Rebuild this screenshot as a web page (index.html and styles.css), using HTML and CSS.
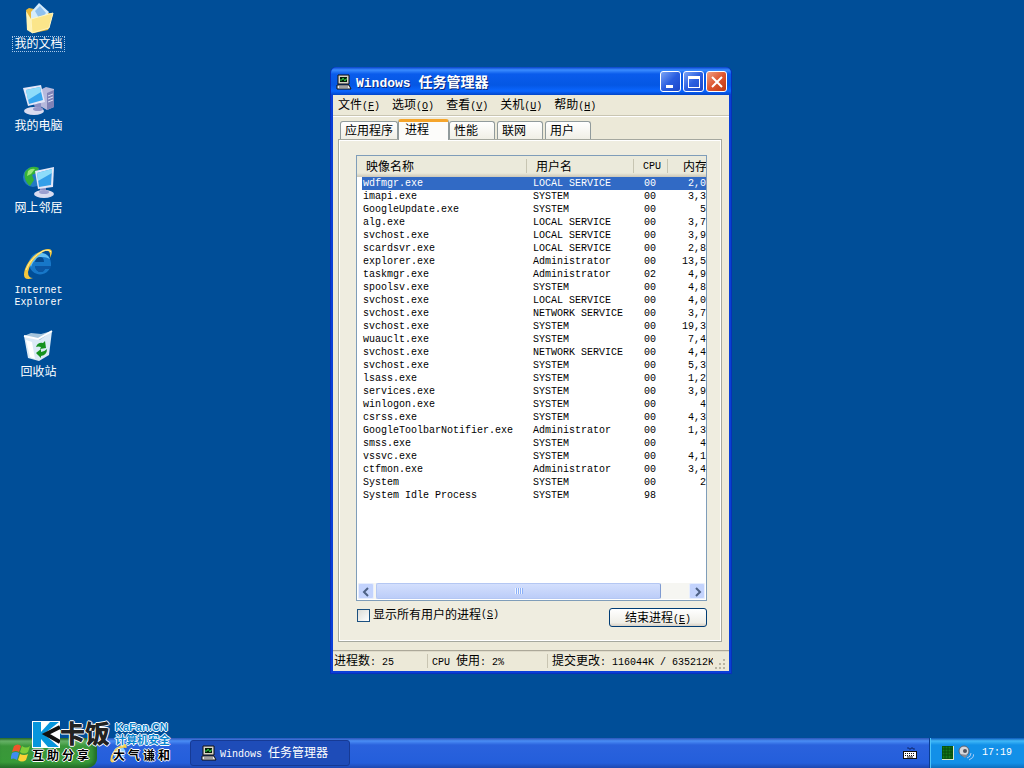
FILE: index.html
```html
<!DOCTYPE html>
<html lang="zh-CN">
<head>
    <meta charset="UTF-8">
    <meta name="viewport" content="width=device-width, initial-scale=1.0">
    <title>Windows 任务管理器</title>
    <link rel="stylesheet" href="styles.css">
</head>
<body>
    <main class="desktop">
        <nav class="icons">
            <a href="#" class="icon selected">
                <svg width="32" height="32" viewBox="0 0 32 32">
                    <path d="M3 8l3-2 5 1 1 3 14 1 4 1-5 16-14 3-5-2z" fill="#e9b93b"/>
                    <path d="M8 10l8-9 10 9-9 14-9-4z" fill="#d6ecfb"/>
                    <path d="M12 9l5-5 6 7-6 7z" fill="#8fc0ee"/>
                    <path d="M8 17l22-6-4 15-17 5z" fill="#fbe58a"/>
                    <path d="M3 9l5 8 1 14-5-3z" fill="#fff3b4"/>
                    <path d="M8 17l22-6-4 15-17 5z" fill="none" stroke="#fff6c4"/>
                </svg>
                <span>我的文档</span>
            </a>
            <a href="#" class="icon">
                <svg width="32" height="32" viewBox="0 0 32 32">
                    <path d="M17 6l6-3 8 2v18l-7 3-7-4z" fill="#b7b9dc"/>
                    <path d="M24 9l7-3v17l-7 3z" fill="#7f82b6"/>
                    <path d="M25 12l5-2M25 15l5-2M25 18l5-2" stroke="#dfe2f6"/>
                    <path d="M11 20l7-1v6h-6z" fill="#8b8fc4"/>
                    <ellipse cx="11" cy="27" rx="10" ry="4" fill="#dadcf0"/>
                    <ellipse cx="15" cy="25" rx="5" ry="2" fill="#9496c8"/>
                    <path d="M0 4l18-3 4 17-17 4z" fill="#e4e7f8"/>
                    <path d="M3 6l14-3 3 13-14 4z" fill="#38a6ee"/>
                    <path d="M3 6l14-3 1 5-13 8z" fill="#8edcfa"/>
                </svg>
                <span>我的电脑</span>
            </a>
            <a href="#" class="icon">
                <svg width="32" height="32" viewBox="0 0 32 32">
                    <circle cx="10" cy="11" r="10" fill="#237ac5"/>
                    <path d="M2 6q6-8 14-4l-3 5-4 2 2 5-4 6q-7-6-5-14z" fill="#35b238"/>
                    <path d="M5 5q3-3 7-2l-4 5-4 2z" fill="#98e777"/>
                    <path d="M17 20h6v6h-6z" fill="#8b8fc4"/>
                    <ellipse cx="21" cy="28" rx="10" ry="4" fill="#dadcf0"/>
                    <ellipse cx="21" cy="26" rx="5" ry="2" fill="#9da0d0"/>
                    <path d="M12 5l19-4-1 20-15 2z" fill="#e4e7f8"/>
                    <path d="M14 7l15-4-1 16-12 2z" fill="#359fe9"/>
                    <path d="M14 7l15-4v4L15 15z" fill="#8edcfa"/>
                </svg>
                <span>网上邻居</span>
            </a>
            <a href="#" class="icon">
                <svg width="32" height="32" viewBox="0 0 32 32">
                    <path d="M27 20A11 11 0 1 1 28 15v3H12q1 6 6 6 3 0 4-4z" fill="#1777c8"/>
                    <path d="M8 12q3-7 11-7 6 1 8 6-8-4-13 0-4 2-6 8-2-3 0-7z" fill="#63c0f5"/>
                    <path d="M12 14h9q0-5-4-5t-5 5z" fill="#04498f"/>
                    <path d="M12 18h16l-1 3h-5q-1 3-4 3-5 0-6-6z" fill="#0b56a4"/>
                    <path d="M27 10q6-12-7-8Q7 8 2 21q-4 13 8 9-5 0-5-6Q8 11 20 4q8-4 7 6z" fill="#f4c73c"/>
                    <path d="M3 22Q8 9 20 3q6-2 8 1" fill="none" stroke="#fff0a0"/>
                </svg>
                <span class="en">Internet<br>Explorer</span>
            </a>
            <a href="#" class="icon">
                <svg width="32" height="32" viewBox="0 0 32 32">
                    <path d="M1 6l13 2 15-7-3 24-10 6-11-3z" fill="#dbeaf6"/>
                    <path d="M1 6l7-3 10 1 11-3-12 9z" fill="#a5c5dd"/>
                    <path d="M1 6l14 3 14-8" fill="none" stroke="#fff" stroke-width="2"/>
                    <path d="M3 10l4 17 5 2-3-17z" fill="#fff"/>
                    <path d="M13 17q2-5 7-4l2-2 1 7-6 1 1-2q-3-1-5 0zM24 19q0 6-6 7v2l-5-5 5-4v3q3 0 6-3z" fill="#15921e"/>
                </svg>
                <span>回收站</span>
            </a>
        </nav>

        <section class="window">
            <header class="titlebar">
                <svg width="16" height="16" viewBox="0 0 16 16">
                    <path d="M2 1h11v9H2z" fill="#d8d4c8" stroke="#111"/>
                    <path d="M4 3h7v5H4z" fill="#041c08"/>
                    <path d="M4 6h2l1-2 2 3 1-2h1" fill="none" stroke="#36d24a"/>
                    <path d="M1 11h12l2 4H1z" fill="#eee" stroke="#111"/>
                    <path d="M3 13h9" stroke="#555"/>
                </svg>
                <h1><span class="en">Windows </span>任务管理器</h1>
                <button class="caption" aria-label="最小化">
                    <svg width="20" height="20" viewBox="0 0 20 20"><path d="M5 13h7v3H5z" fill="#fff"/></svg>
                </button>
                <button class="caption" aria-label="最大化">
                    <svg width="20" height="20" viewBox="0 0 20 20"><path d="M4 4h12v12H4zM5 7v8h10V7z" fill="#fff" fill-rule="evenodd"/></svg>
                </button>
                <button class="caption close" aria-label="关闭">
                    <svg width="20" height="20" viewBox="0 0 20 20"><path d="M5 5l10 10M15 5L5 15" stroke="#fff" stroke-width="2"/></svg>
                </button>
            </header>

            <div class="content">
                <div class="menu">
                    <button>文件<span class="en">(<u>F</u>)</span></button>
                    <button>选项<span class="en">(<u>O</u>)</span></button>
                    <button>查看<span class="en">(<u>V</u>)</span></button>
                    <button>关机<span class="en">(<u>U</u>)</span></button>
                    <button>帮助<span class="en">(<u>H</u>)</span></button>
                </div>

                <div class="tabs" role="tablist">
                    <button class="tab wide" role="tab">应用程序</button>
                    <button class="tab active" role="tab" aria-selected="true">进程</button>
                    <button class="tab" role="tab">性能</button>
                    <button class="tab" role="tab">联网</button>
                    <button class="tab" role="tab">用户</button>
                </div>

                <div class="panel">
                    <div class="list">
                        <table>
                            <colgroup>
                                <col class="col-name">
                                <col class="col-user">
                                <col class="col-cpu">
                                <col>
                            </colgroup>
                            <thead>
                                <tr><th>映像名称</th><th>用户名</th><th class="en">CPU</th><th>内存</th></tr>
                            </thead>
                            <tbody>
                                <tr class="current"><td>wdfmgr.exe</td><td>LOCAL SERVICE</td><td>00</td><td>2,0</td></tr>
                                <tr><td>imapi.exe</td><td>SYSTEM</td><td>00</td><td>3,3</td></tr>
                                <tr><td>GoogleUpdate.exe</td><td>SYSTEM</td><td>00</td><td>5</td></tr>
                                <tr><td>alg.exe</td><td>LOCAL SERVICE</td><td>00</td><td>3,7</td></tr>
                                <tr><td>svchost.exe</td><td>LOCAL SERVICE</td><td>00</td><td>3,9</td></tr>
                                <tr><td>scardsvr.exe</td><td>LOCAL SERVICE</td><td>00</td><td>2,8</td></tr>
                                <tr><td>explorer.exe</td><td>Administrator</td><td>00</td><td>13,5</td></tr>
                                <tr><td>taskmgr.exe</td><td>Administrator</td><td>02</td><td>4,9</td></tr>
                                <tr><td>spoolsv.exe</td><td>SYSTEM</td><td>00</td><td>4,8</td></tr>
                                <tr><td>svchost.exe</td><td>LOCAL SERVICE</td><td>00</td><td>4,0</td></tr>
                                <tr><td>svchost.exe</td><td>NETWORK SERVICE</td><td>00</td><td>3,7</td></tr>
                                <tr><td>svchost.exe</td><td>SYSTEM</td><td>00</td><td>19,3</td></tr>
                                <tr><td>wuauclt.exe</td><td>SYSTEM</td><td>00</td><td>7,4</td></tr>
                                <tr><td>svchost.exe</td><td>NETWORK SERVICE</td><td>00</td><td>4,4</td></tr>
                                <tr><td>svchost.exe</td><td>SYSTEM</td><td>00</td><td>5,3</td></tr>
                                <tr><td>lsass.exe</td><td>SYSTEM</td><td>00</td><td>1,2</td></tr>
                                <tr><td>services.exe</td><td>SYSTEM</td><td>00</td><td>3,9</td></tr>
                                <tr><td>winlogon.exe</td><td>SYSTEM</td><td>00</td><td>4</td></tr>
                                <tr><td>csrss.exe</td><td>SYSTEM</td><td>00</td><td>4,3</td></tr>
                                <tr><td>GoogleToolbarNotifier.exe</td><td>Administrator</td><td>00</td><td>1,3</td></tr>
                                <tr><td>smss.exe</td><td>SYSTEM</td><td>00</td><td>4</td></tr>
                                <tr><td>vssvc.exe</td><td>SYSTEM</td><td>00</td><td>4,1</td></tr>
                                <tr><td>ctfmon.exe</td><td>Administrator</td><td>00</td><td>3,4</td></tr>
                                <tr><td>System</td><td>SYSTEM</td><td>00</td><td>2</td></tr>
                                <tr><td>System Idle Process</td><td>SYSTEM</td><td>98</td><td></td></tr>
                            </tbody>
                        </table>
                        <div class="scrollbar">
                            <button aria-label="向左滚动">
                                <svg width="15" height="15" viewBox="0 0 15 15"><path d="M9 4L5 8l4 4" fill="none" stroke="#4d6185" stroke-width="2"/></svg>
                            </button>
                            <div class="thumb"><span class="grip"></span></div>
                            <button aria-label="向右滚动">
                                <svg width="15" height="15" viewBox="0 0 15 15"><path d="M6 4l4 4-4 4" fill="none" stroke="#4d6185" stroke-width="2"/></svg>
                            </button>
                        </div>
                    </div>
                    <div class="actions">
                        <label><input type="checkbox">显示所有用户的进程<span class="en">(<u>S</u>)</span></label>
                        <button class="end">结束进程<span class="en">(<u>E</u>)</span></button>
                    </div>
                </div>

                <footer class="status">
                    <span class="count">进程数<span class="en">: 25</span></span>
                    <span class="usage"><span class="en">CPU </span>使用<span class="en">: 2%</span></span>
                    <span class="commit">提交更改<span class="en">: 116044K / 635212K</span></span>
                    <svg width="13" height="13" viewBox="0 0 13 13">
                        <path d="M9 1h2v2H9zM5 5h2v2H5zM9 5h2v2H9zM1 9h2v2H1zM5 9h2v2H5zM9 9h2v2H9z" fill="#b8b4a3"/>
                    </svg>
                </footer>
            </div>
        </section>
    </main>

    <footer class="taskbar">
        <button class="start" aria-label="开始">
            <svg width="20" height="20" viewBox="0 0 20 20">
                <path d="M3 3q4-3 7 0L8 9Q5 7 1 9z" fill="#f0552b"/>
                <path d="M11 3q4 3 8 0l-2 6q-4 3-8 0z" fill="#7fce3a"/>
                <path d="M1 10q4-2 7 0l-2 7q-4-3-7 0z" fill="#3f8df0"/>
                <path d="M9 11q4 2 8 0l-2 6q-4 3-8 0z" fill="#fbd136"/>
            </svg>
        </button>
        <div class="quick">
            <svg width="20" height="20" viewBox="0 0 16 16">
                <path d="M13 10a5 5 0 1 1 0-4v2H6q1 3 4 2z" fill="#8bd0ff"/>
                <path d="M14 4q1-5-5-2-8 5-8 12 1 3 5 0-4 1-3-3Q6 3 14 4z" fill="#f6d04d"/>
            </svg>
        </div>
        <button class="task">
            <svg width="16" height="16" viewBox="0 0 16 16">
                <path d="M2 1h11v9H2z" fill="#d8d4c8" stroke="#111"/>
                <path d="M4 3h7v5H4z" fill="#041c08"/>
                <path d="M4 6h2l1-2 2 3 1-2h1" fill="none" stroke="#36d24a"/>
                <path d="M1 11h12l2 4H1z" fill="#eee" stroke="#111"/>
                <path d="M3 13h9" stroke="#555"/>
            </svg>
            <span><span class="en">Windows </span>任务管理器</span>
        </button>
        <svg class="keyboard" width="14" height="14" viewBox="0 0 14 14">
            <path d="M4 2h2v1h2V2h2v1h2" fill="none" stroke="#102a70"/>
            <path d="M0 5h14v8H0z" fill="#111"/>
            <path d="M1 6h12v6H1z" fill="#fff"/>
            <path d="M2 7.500h10M2 9.500h10" stroke="#111" stroke-dasharray="1 1"/>
            <path d="M4 11h6" stroke="#111"/>
        </svg>
        <div class="tray">
            <svg width="12" height="14" viewBox="0 0 12 14">
                <path d="M0 0h12v14H0z" fill="#d9e8c8"/>
                <path d="M0 0h11v13H0z" fill="#0a5a10"/>
                <path d="M1 1h9v11H1z" fill="#147a1a"/>
                <path d="M0 3h11M0 6h11M0 9h11M3 0v13M6 0v13M9 0v13" stroke="#084a0c"/>
            </svg>
            <svg width="16" height="16" viewBox="0 0 16 16">
                <circle cx="6" cy="6" r="5" fill="#d5d7dc" stroke="#596070"/>
                <circle cx="7" cy="6" r="2" fill="#4d525e"/>
                <path d="M2 9l5 4 3-3z" fill="#858b98"/>
                <path d="M9 13q4-1 4-5M11 15q5-2 5-6" fill="none" stroke="#a9cdf8"/>
            </svg>
            <time class="en">17:19</time>
        </div>
    </footer>

    <aside class="watermark">
        <div class="brand">
            <svg width="28" height="27" viewBox="0 0 28 27">
                <path d="M0 0h28v27H0z" fill="#fff"/>
                <path d="M1 1h8v10l9-10h9L12 13l15 13H16l-7-8v8H1z" fill="#0796dc"/>
                <path d="M28 3v21L11 13z" fill="#fff"/>
                <path d="M28 6L14 13l14 8" fill="none" stroke="#111" stroke-width="4"/>
            </svg>
            <strong>卡饭</strong>
            <div class="site"><span>KaFan.CN</span><span>计算机安全</span></div>
        </div>
        <div class="motto">
            <p><span>互</span><span>助</span><span>分</span><span>享</span></p>
            <p><span>大</span><span>气</span><span>谦</span><span>和</span></p>
        </div>
    </aside>
</body>
</html>
```

FILE: styles.css
```css
* {
    box-sizing: border-box;
}
body {
    margin: 0;
    min-height: 100vh;
    display: flex;
    flex-direction: column;
    position: relative;
    overflow: hidden;
    background: #004e98;
    font: 12px/14px "Liberation Sans", "Noto Sans CJK SC", sans-serif;
    color: #000;
}
button {
    font: inherit;
    color: inherit;
    padding: 0;
    border: 0;
    background: none;
}
svg {
    display: block;
    flex: none;
}
.en {
    font-family: "Liberation Mono", monospace;
    font-size: 10px;
    line-height: 10px;
    white-space: pre;
}

/* desktop */
.desktop {
    flex: 1;
    position: relative;
}
.icons {
    width: 77px;
    display: flex;
    flex-direction: column;
    padding-top: 2px;
}
.icon {
    height: 82px;
    display: flex;
    flex-direction: column;
    align-items: center;
    gap: 2px;
    color: #fff;
    text-align: center;
    text-decoration: none;
}
.icon span {
    padding: 0 1px;
    line-height: 14px;
    border: 1px solid transparent;
}
.icon .en {
    padding-top: 2px;
    line-height: 12px;
}
.icon.selected span {
    border: 1px dotted #a9c6e6;
}

/* window */
.window {
    position: absolute;
    left: 330px;
    top: 67px;
    width: 402px;
    padding: 0 2px 2px;
    background: #0a3fd8;
    border: 1px solid #0831b8;
    border-top: 0;
    border-radius: 6px 6px 0 0;
}
.titlebar {
    height: 28px;
    margin: 0 -2px;
    padding: 1px 4px 0 5px;
    display: flex;
    align-items: center;
    gap: 2px;
    border-radius: 6px 6px 0 0;
    background: linear-gradient(#0842c8, #3a8cff 3px, #0a5cec 7px, #0457e4 18px, #0a66ff 24px, #0345c8);
    color: #fff;
}
.titlebar h1 {
    flex: 1;
    margin: 0;
    padding-left: 2px;
    font-size: 14px;
    line-height: 16px;
    text-shadow: 1px 1px #0a2a80;
}
.titlebar .en {
    font-size: 13px;
}
.caption {
    width: 21px;
    height: 21px;
    display: grid;
    place-items: center;
    border: 1px solid #fff;
    border-radius: 3px;
    background: linear-gradient(135deg, #7ba4f5, #2a5ee0 50%, #1c46c8);
    overflow: hidden;
}
.caption.close {
    background: linear-gradient(135deg, #f0a084, #dd5530 50%, #c03a12);
}
.content {
    background: #ece9d8;
}
.menu {
    height: 21px;
    display: flex;
    gap: 12px;
    padding: 0 5px;
    border-bottom: 1px solid #c9c5b2;
    box-shadow: 0 1px #fff;
}
.tabs {
    display: flex;
    align-items: flex-end;
    height: 23px;
    padding-left: 7px;
}
.tab {
    width: 46px;
    height: 18px;
    margin-right: 2px;
    padding-left: 4px;
    text-align: left;
    border: 1px solid #919b9c;
    border-bottom: 0;
    border-radius: 3px 3px 0 0;
    background: linear-gradient(#fff, #f0efe6);
}
.tab.wide {
    width: 58px;
    margin-right: 0;
}
.tab.active {
    width: 51px;
    height: 21px;
    margin: 0 0 -1px;
    padding: 0 0 2px 6px;
    position: relative;
    border-top: 3px solid #f5a52c;
    background: #fcfcfa;
}
.panel {
    margin: 0 7px 8px 5px;
    padding: 15px 14px 14px 17px;
    border: 1px solid #a5a89f;
    background: #efede0;
    box-shadow: inset 1px 1px #fff, inset -1px -1px #fff;
}

/* process list */
.list {
    height: 446px;
    display: flex;
    flex-direction: column;
    justify-content: space-between;
    padding-bottom: 1px;
    border: 1px solid #7f9db9;
    background: #fff;
    overflow: hidden;
}
table {
    width: 100%;
    table-layout: fixed;
    border-spacing: 0;
}
.col-name {
    width: 170px;
}
.col-user {
    width: 107px;
}
.col-cpu {
    width: 34px;
}
th {
    height: 21px;
    padding: 0 0 0 9px;
    font-weight: normal;
    text-align: left;
    background: linear-gradient(transparent 3px, #c7c5b2 3px, #c7c5b2 17px, transparent 17px) right / 1px 100% no-repeat, linear-gradient(#ebeadb 17px, #cbc7b8);
    white-space: nowrap;
}
th:last-child {
    padding-left: 15px;
    background: linear-gradient(#ebeadb 17px, #cbc7b8);
}
td {
    height: 13px;
    padding: 0 0 0 6px;
    font: 10px/13px "Liberation Mono", monospace;
    white-space: pre;
}
td:first-child {
    padding-left: 1px;
    border-left: 5px solid transparent;
    background-clip: padding-box;
}
td:nth-child(3) {
    padding-left: 10px;
}
td:last-child {
    padding: 0;
    text-align: right;
}
.current td {
    background-color: #316ac5;
    color: #fff;
}
.scrollbar {
    display: flex;
    gap: 2px;
    margin: 0 1px;
    background: #f6f6f2;
}
.scrollbar button {
    width: 16px;
    height: 16px;
    display: grid;
    place-items: center;
    border: 1px solid #e7eefe;
    border-radius: 2px;
    background: #c3d3fd;
}
.thumb {
    flex: 1;
    margin-right: 26px;
    display: grid;
    place-items: center;
    border: 1px solid #b4c7f3;
    border-right-color: #7f9bd2;
    border-radius: 2px;
    background: linear-gradient(#d3dffd, #bccdf8);
}
.grip {
    width: 8px;
    height: 6px;
    background: repeating-linear-gradient(90deg, #eef4fe 0 1px, #8cb0f8 1px 2px);
}
.actions {
    display: flex;
    justify-content: space-between;
    padding-top: 7px;
}
.actions label {
    height: 14px;
    display: flex;
    align-items: center;
}
.actions input {
    appearance: none;
    width: 13px;
    height: 13px;
    margin: 0 3px 0 1px;
    border: 1px solid #1c5180;
    background: linear-gradient(135deg, #dcdcd7, #fff);
}
.end {
    width: 98px;
    height: 19px;
    border: 1px solid #003c74;
    border-radius: 3px;
    background: linear-gradient(#fff, #f0efe8 80%, #d8d0c4);
}
.status {
    height: 21px;
    display: flex;
    align-items: center;
    padding-left: 1px;
    border-top: 1px solid #aca899;
    box-shadow: inset 0 1px #dedac9;
    white-space: nowrap;
}
.count {
    width: 93px;
}
.usage {
    width: 120px;
    padding-left: 4px;
    border-left: 1px solid #c9c5b2;
}
.commit {
    flex: 1;
    padding-left: 4px;
    border-left: 1px solid #c9c5b2;
    overflow: hidden;
}
.status svg {
    align-self: flex-end;
    margin: 0 2px 0 1px;
}

/* taskbar */
.taskbar {
    height: 30px;
    display: flex;
    align-items: center;
    background: linear-gradient(#2a55b8, #4a8df5 3px, #2a62dd 7px, #245edb 25px, #1e48b0);
    color: #fff;
}
.start {
    width: 97px;
    height: 30px;
    display: flex;
    align-items: center;
    padding-left: 11px;
    border-radius: 0 10px 10px 0;
    background: linear-gradient(#2f6a2f, #6bb66b 3px, #3a963a 8px, #389a38 24px, #26702b);
    box-shadow: inset -3px 0 4px #206b25;
}
.quick {
    width: 93px;
    padding-left: 12px;
}
.task {
    width: 160px;
    height: 26px;
    display: flex;
    align-items: center;
    gap: 3px;
    padding-left: 10px;
    border: 1px solid #163a94;
    border-radius: 3px;
    background: #1e4cb8;
}
.keyboard {
    margin: 0 12px 0 auto;
}
.tray {
    width: 95px;
    height: 30px;
    display: flex;
    align-items: center;
    padding-left: 12px;
    gap: 4px;
    border-left: 1px solid #0a3d91;
    background: linear-gradient(#0c59b9, #40b8f8 3px, #1290e8 7px, #1290e8 25px, #0d6ebd);
    box-shadow: inset 1px 0 #4cc4fa;
}
.tray time {
    padding-left: 4px;
}

/* forum mark lying over the taskbar */
.watermark {
    position: absolute;
    left: 32px;
    bottom: 4px;
    text-shadow: 1px 0 #fff, -1px 0 #fff, 0 1px #fff, 0 -1px #fff;
    pointer-events: none;
}
.brand {
    display: flex;
    align-items: center;
}
.brand strong {
    font-size: 25px;
    line-height: 28px;
    font-weight: 900;
    color: #222;
}
.site {
    display: flex;
    flex-direction: column;
    margin-left: 5px;
    font-size: 11px;
    line-height: 13px;
    font-weight: bold;
    color: #0a86d0;
}
.motto {
    display: flex;
    gap: 24px;
}
.motto p {
    width: 57px;
    margin: 0;
    display: flex;
    justify-content: space-between;
    line-height: 16px;
    font-weight: bold;
}
```
